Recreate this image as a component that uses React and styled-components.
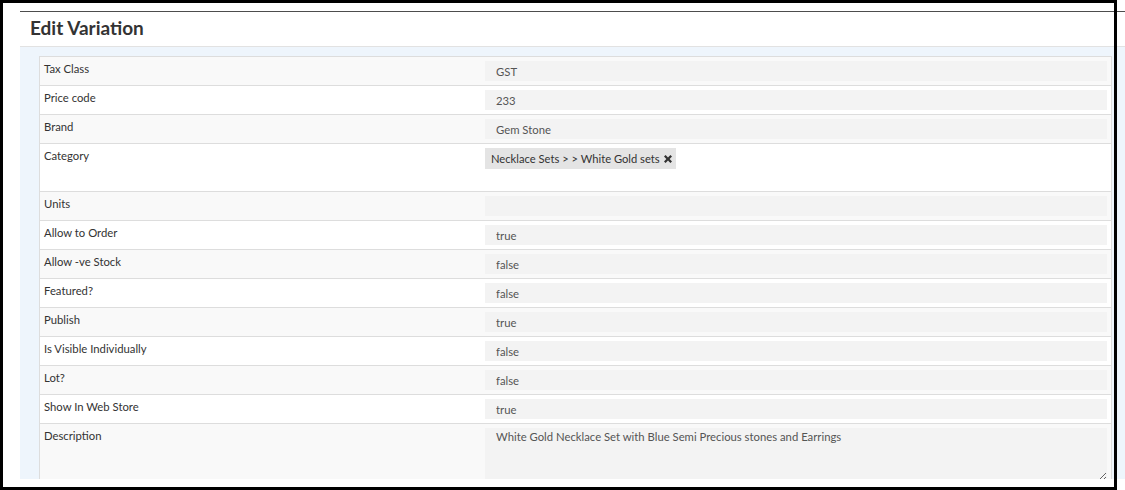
import React from 'react';
import styled, { createGlobalStyle } from 'styled-components';

const Global = createGlobalStyle`
  html, body { margin: 0; padding: 0; background: #fff; }
  body { font-family: Lato, "Open Sans", "DejaVu Sans", sans-serif; }
  * { box-sizing: border-box; }
`;

const Page = styled.div`
  position: relative;
  width: 1125px;
  height: 490px;
  overflow: hidden;
  background: #fff;
  padding: 11px 0 0 20px;
`;

const Panel = styled.section`
  height: 468px;
  overflow: hidden;
  border-top: 1px solid #4d4d4d;
  display: flex;
  flex-direction: column;
`;

const Header = styled.header`
  height: 35px;
  flex: none;
  border-bottom: 1px solid #e2e2e2;
  padding: 0 0 3px 10px;
  display: flex;
  align-items: center;
`;

const Title = styled.h2`
  margin: 0;
  font-size: 19px;
  font-weight: 700;
  color: #333;
`;

const Body = styled.div`
  flex: 1;
  background: #eef5fc;
  padding: 9px 13px 0 19px;
`;

const Table = styled.div`
  border: 1px solid #dddddd;
  border-bottom: none;
  background: #fff;
`;

const Row = styled.div`
  display: grid;
  grid-template-columns: 441px 1fr;
  background: ${p => (p.$striped ? '#f9f9f9' : '#fff')};
  & + & { border-top: 1px solid #dddddd; }
`;

const Label = styled.div`
  padding: 4px;
  font-size: 11.3px;
  line-height: 16px;
  color: #333;
`;

const Cell = styled.div`
  padding: 4px;
`;

const Field = styled.input`
  display: block;
  width: 100%;
  height: 20px;
  border: none;
  outline: none;
  background: #f3f3f3;
  padding: 0 11px;
  font-family: inherit;
  font-size: 11.3px;
  color: #555;
`;

const MultiSelect = styled.div`
  min-height: 39px;
  display: flex;
  align-items: flex-start;
  flex-wrap: wrap;
`;

const Tag = styled.span`
  display: inline-flex;
  align-items: center;
  gap: 3px;
  height: 21px;
  padding: 0 3px 0 6px;
  background: #e4e4e4;
  color: #333;
  font-size: 11.2px;
`;

const Remove = styled.svg`
  width: 10px;
  height: 10px;
  display: block;
`;

const TextArea = styled.textarea`
  display: block;
  width: 100%;
  height: 53px;
  border: none;
  outline: none;
  background: #f3f3f3;
  padding: 1px 11px;
  font-family: inherit;
  font-size: 11.3px;
  line-height: 16px;
  color: #555;
  resize: vertical;
`;

const Frame = styled.div`
  position: absolute;
  left: 0;
  top: 0;
  width: 1117px;
  height: 490px;
  border: 3px solid #000;
  pointer-events: none;
`;

const rows = [
  ['Tax Class', 'GST'],
  ['Price code', '233'],
  ['Brand', 'Gem Stone'],
  ['Category', null],
  ['Units', ''],
  ['Allow to Order', 'true'],
  ['Allow -ve Stock', 'false'],
  ['Featured?', 'false'],
  ['Publish', 'true'],
  ['Is Visible Individually', 'false'],
  ['Lot?', 'false'],
  ['Show In Web Store', 'true'],
];

export default function App() {
  return (
    <>
      <Global />
      <Page>
        <Panel>
          <Header>
            <Title>Edit Variation</Title>
          </Header>
          <Body>
            <Table>
              {rows.map(([label, value], i) => (
                <Row key={label} $striped={i % 2 === 0}>
                  <Label>{label}</Label>
                  <Cell>
                    {value === null ? (
                      <MultiSelect>
                        <Tag>
                          Necklace Sets &gt; &gt; White Gold sets
                          <Remove viewBox="0 0 10 10">
                            <path
                              d="M1 2.6 L2.6 1 L5 3.4 L7.4 1 L9 2.6 L6.6 5 L9 7.4 L7.4 9 L5 6.6 L2.6 9 L1 7.4 L3.4 5 Z"
                              fill="#333"
                            />
                          </Remove>
                        </Tag>
                      </MultiSelect>
                    ) : (
                      <Field readOnly value={value} />
                    )}
                  </Cell>
                </Row>
              ))}
              <Row $striped>
                <Label>Description</Label>
                <Cell>
                  <TextArea
                    readOnly
                    value="White Gold Necklace Set with Blue Semi Precious stones and Earrings"
                  />
                </Cell>
              </Row>
            </Table>
          </Body>
        </Panel>
        <Frame />
      </Page>
    </>
  );
}
